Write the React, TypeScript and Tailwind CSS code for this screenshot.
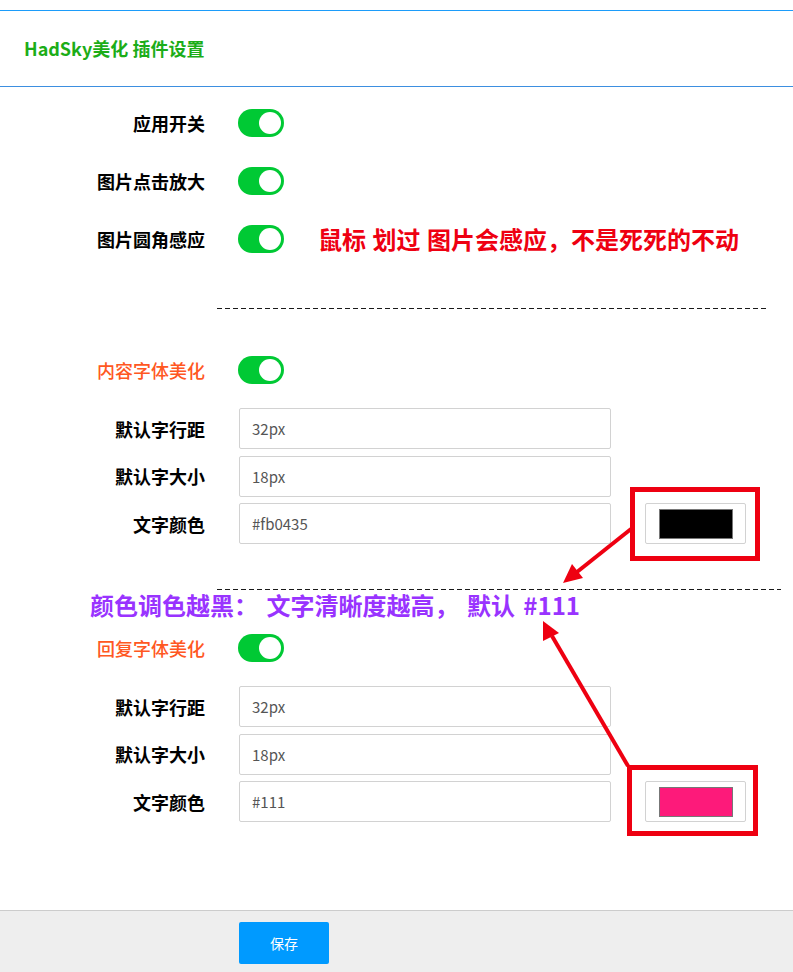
import React from "react";

const FONT = { fontFamily: '"Noto Sans CJK SC", "Noto Sans", sans-serif' };

function Toggle() {
  return (
    <div className="relative h-[28px] w-[46px] shrink-0 rounded-full bg-[#00c934]">
      <div className="absolute right-[3px] top-[3px] h-[22px] w-[22px] rounded-full bg-white" />
    </div>
  );
}

function Label({ children, color = "text-black", weight = "font-bold" }: { children: React.ReactNode; color?: string; weight?: string }) {
  return (
    <div className={`w-[205px] shrink-0 text-right text-[18px] leading-[28px] ${color} ${weight}`}>{children}</div>
  );
}

function ToggleRow({ label, orange, extra }: { label: string; orange?: boolean; extra?: React.ReactNode }) {
  return (
    <div className="flex h-[28px] items-center">
      {orange ? (
        <Label color="text-[#ff5722]" weight="font-medium">{label}</Label>
      ) : (
        <Label>{label}</Label>
      )}
      <div className="ml-[33px]">
        <Toggle />
      </div>
      {extra}
    </div>
  );
}

function InputRow({ label, value, swatch }: { label: string; value: string; swatch?: string }) {
  return (
    <div className="flex h-[41px] items-center">
      <Label>{label}</Label>
      <input
        readOnly
        defaultValue={value}
        className="ml-[34px] h-[41px] w-[372px] rounded-[2px] border border-[#d2d2d2] bg-white px-[12px] text-[15px] text-[#555] outline-none"
        style={FONT}
      />
      {swatch && (
        <div className="ml-[34px] flex h-[41px] w-[101px] items-center justify-center rounded-[2px] border border-[#d2d2d2] bg-white">
          <div className="h-[30px] w-[74px] border border-[#777]" style={{ backgroundColor: swatch }} />
        </div>
      )}
    </div>
  );
}

function Dashed({ width }: { width: string }) {
  return (
    <div
      className={`ml-[217px] h-px ${width} bg-[repeating-linear-gradient(to_right,#1a1a1a_0_5px,transparent_5px_8px)]`}
    />
  );
}

export default function App() {
  return (
    <div className="relative h-[972px] w-[793px] overflow-hidden bg-white" style={FONT}>
      <div className="h-[10px]" />
      <div className="flex h-[77px] items-center border-b border-t border-b-[#3d8fe0] border-t-[#1c9cfa] pl-[24px]">
        <span className="text-[18px] font-bold text-[#1cad18]">HadSky美化 插件设置</span>
      </div>

      <div className="flex flex-col gap-[30px] pt-[22px]">
        <ToggleRow label="应用开关" />
        <ToggleRow label="图片点击放大" />
        <ToggleRow
          label="图片圆角感应"
          extra={
            <span className="ml-[34px] text-[24px] font-bold leading-[28px] text-[#ee0011] [word-spacing:1px]">
              鼠标 划过 图片会感应，不是死死的不动
            </span>
          }
        />
      </div>

      <div className="mt-[55px]">
        <Dashed width="w-[550px]" />
      </div>

      <div className="mt-[47px]">
        <ToggleRow label="内容字体美化" orange />
      </div>
      <div className="mt-[24px] flex flex-col gap-[6.5px]">
        <InputRow label="默认字行距" value="32px" />
        <InputRow label="默认字大小" value="18px" />
        <InputRow label="文字颜色" value="#fb0435" swatch="#000000" />
      </div>

      <div className="mt-[45px]">
        <Dashed width="w-[564px]" />
      </div>
      <div className="pl-[90px] text-[24px] font-bold leading-[30px] text-[#9933ff] [word-spacing:3px]">
        颜色调色越黑： 文字清晰度越高， 默认 #111
      </div>

      <div className="mt-[14px]">
        <ToggleRow label="回复字体美化" orange />
      </div>
      <div className="mt-[24px] flex flex-col gap-[6.5px]">
        <InputRow label="默认字行距" value="32px" />
        <InputRow label="默认字大小" value="18px" />
        <InputRow label="文字颜色" value="#111" swatch="#fd1a7a" />
      </div>

      <div className="absolute bottom-0 left-0 right-0 h-[62px] border-t border-[#cccccc] bg-[#eeeeee] pl-[239px] pt-[11px]">
        <button className="h-[42px] w-[90px] rounded-[2px] bg-[#009aff] text-[14px] text-white">保存</button>
      </div>

      <svg className="pointer-events-none absolute left-0 top-0" width="793" height="972" viewBox="0 0 793 972">
        <rect x="632.5" y="489.5" width="125" height="69" fill="none" stroke="#ee0011" strokeWidth="5" />
        <rect x="629.5" y="767.5" width="126" height="66" fill="none" stroke="#ee0011" strokeWidth="5" />
        <line x1="631" y1="529" x2="577" y2="572" stroke="#ee0011" strokeWidth="4" />
        <polygon points="563,583 583,578 572,564" fill="#ee0011" />
        <line x1="628" y1="766" x2="552" y2="636" stroke="#ee0011" strokeWidth="4" />
        <polygon points="543,621 559,633 543,641" fill="#ee0011" />
      </svg>
    </div>
  );
}
